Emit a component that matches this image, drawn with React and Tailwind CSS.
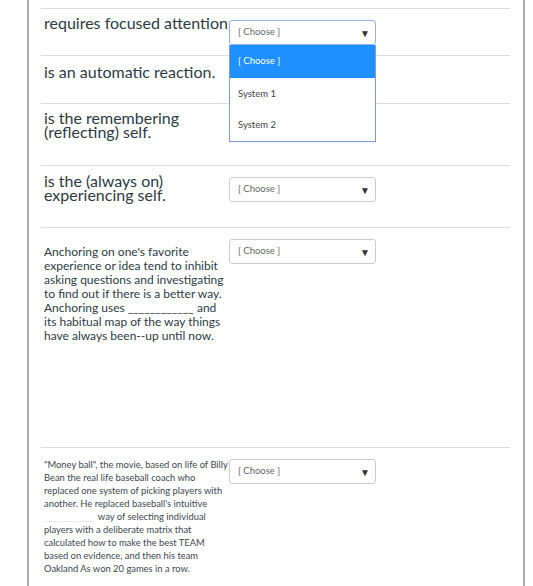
import React from "react";

const font = { fontFamily: "Lato, 'Open Sans', sans-serif" };

function Select({ focused = false, children }) {
  return (
    <div className="relative mt-[1px] w-[147px] shrink-0">
      <div
        className={
          "flex h-[25px] w-[147px] items-center justify-between rounded-[3px] border bg-white pl-[8px] pr-[5px] " +
          (focused ? "border-[#95b2e6]" : "border-[#c8cdd0]")
        }
      >
        <span className="text-[9.5px] text-[#666]">[ Choose ]</span>
        <span className="text-[10px] leading-none text-[#333]">▼</span>
      </div>
      {children}
    </div>
  );
}

function Row({ children, className = "" }) {
  return (
    <div className={"flex border-t border-[#dcdcdc] pt-[10px] " + className}>
      {children}
    </div>
  );
}

export default function App() {
  return (
    <div className="min-h-[586px] w-[533px] bg-white pl-[27px]" style={font}>
      <div className="min-h-[586px] w-[498px] border-x-2 border-[#ababab] pl-[12px] pr-[13px] pt-[8px]">
        <Row className="h-[47px]">
          <div className="-mt-[3px] w-[188px] shrink-0 pl-[3px] text-[16px] leading-[14px] text-[#2d3b45]">
            requires focused attention
          </div>
          <Select focused>
            <div className="absolute left-0 top-[25px] z-10 w-[147px] border border-t-0 border-[#7d9cd3] bg-white">
              <div className="flex h-[33px] items-center bg-[#1e90ff] pl-[8px] text-[9.5px] text-white">
                [ Choose ]
              </div>
              <div className="flex h-[32px] items-center pl-[8px] text-[9.5px] text-[#444]">
                System 1
              </div>
              <div className="flex h-[31px] items-center pl-[8px] text-[9.5px] text-[#444]">
                System 2
              </div>
            </div>
          </Select>
        </Row>
        <Row className="h-[48px]">
          <div className="-mt-[1px] w-[188px] shrink-0 pl-[3px] text-[16px] leading-[14px] text-[#2d3b45]">
            is an automatic reaction.
          </div>
          <Select />
        </Row>
        <Row className="h-[62px]">
          <div className="-mt-[3px] w-[188px] shrink-0 pl-[3px] text-[16px] leading-[14px] text-[#2d3b45]">
            is the remembering
            <br />
            (reflecting) self.
          </div>
        </Row>
        <Row className="h-[62px]">
          <div className="-mt-[2px] w-[188px] shrink-0 pl-[3px] text-[16px] leading-[14px] text-[#2d3b45]">
            is the (always on)
            <br />
            experiencing self.
          </div>
          <Select />
        </Row>
        <Row className="h-[220px]">
          <div className="w-[188px] shrink-0 pl-[3px] pt-[7px] pr-[2px] text-[12px] leading-[14px] text-[#2d3b45]">
            Anchoring on one's favorite experience or idea tend to inhibit asking questions and investigating to find out if there is a better way. Anchoring uses ____________ and its habitual map of the way things have always been--up until now.
          </div>
          <Select />
        </Row>
        <Row>
          <div className="w-[188px] shrink-0 pl-[3px] pr-[1px] text-[9.4px] leading-[13px] text-[#3d4850]">
            "Money ball", the movie, based on life of Billy Bean the real life baseball coach who replaced one system of picking players with another. He replaced baseball's intuitive{" "}
            <span className="text-[#d6dde3]">____________</span> way of selecting individual players with a deliberate matrix that calculated how to make the best TEAM based on evidence, and then his team Oakland As won 20 games in a row.
          </div>
          <Select />
        </Row>
      </div>
    </div>
  );
}
